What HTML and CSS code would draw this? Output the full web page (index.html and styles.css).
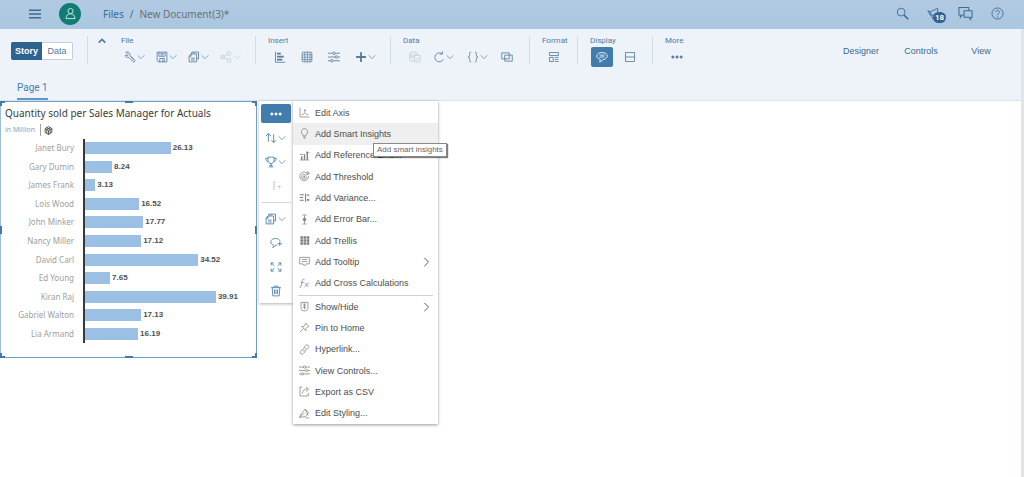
FILE: index.html
```html
<!DOCTYPE html>
<html lang="en">
<head>
<meta charset="utf-8">
<title>New Document(3)</title>
<link rel="stylesheet" href="styles.css">
</head>
<body>
<svg class="sprite" aria-hidden="true">
  <symbol id="chev" viewBox="0 0 12 12"><path d="M2 4l4 4 4-4"/></symbol>
  <symbol id="right" viewBox="0 0 12 12"><path d="M4 1l5 5-5 5"/></symbol>
  <symbol id="wrench" viewBox="0 0 16 16"><path d="M2.500 1.500c3-1 6 1 5.500 4.500l6.500 6.500c.5 1.500-1 2.500-2 2L6.500 8.500C4 9 1.500 7.500 1.500 5.500L4 6.500 5.500 5zM9 7l4 5"/></symbol>
  <symbol id="save" viewBox="0 0 16 16"><path d="M1.500 1.500h13v13H3L1.500 13zM4 1.500v5.500h8V1.500M5 14.500V10h6v4.500M9 11.500v3M6 3.500h4M6 5.200h4"/></symbol>
  <symbol id="copy" viewBox="0 0 16 16"><path d="M5 4V1.500h9v9h-2M8 1.500v2M4 4h7.500v10.500h-10V7zM4 4v3H1.500M4 9.500h5M4 12h5"/></symbol>
  <symbol id="share" viewBox="0 0 16 16"><circle cx="3.500" cy="8" r="2.500"/><circle cx="12" cy="3.500" r="2.500"/><circle cx="12" cy="12.500" r="2.500"/><path d="M6 7l4-2.500M6 9l4 2.500M1 8h5"/></symbol>
  <symbol id="bars" viewBox="0 0 16 16"><path d="M2 1v14h13"/><path d="M4 3.500h5M4 7.500h9M4 11.500h7" stroke-width="2.600"/></symbol>
  <symbol id="table" viewBox="0 0 16 16"><rect x="1.500" y="1.500" width="13" height="13" rx="2"/><path d="M1.500 5h13M1.500 8.300h13M1.500 11.500h13M5 1.500v13M8.500 1.500v13M12 1.500v13" stroke-width=".9"/></symbol>
  <symbol id="sliders" viewBox="0 0 16 16"><path d="M0 3h6M10 3h6M0 8h9M13 8h3M0 13h3M7 13h9"/><circle cx="8" cy="3" r="1.700"/><circle cx="11" cy="8" r="1.700"/><circle cx="5" cy="13" r="1.700"/></symbol>
  <symbol id="plus" viewBox="0 0 16 16"><path d="M8 1.500v13M1.500 8h13" stroke-width="2.400"/></symbol>
  <symbol id="database" viewBox="0 0 16 16"><ellipse cx="6" cy="3.500" rx="5" ry="2"/><path d="M1 3.500v8c0 1.500 2 2 5 2M11 3.500V5M1 7.500c1 1.500 3 1.500 5 1.500M7.500 6h7.500v8.500H7.500zM9 10l2 2 3-4M1 5.500c2 2 4 2 6 1.500"/></symbol>
  <symbol id="refresh" viewBox="0 0 16 16"><path d="M12 3.500A6 6 0 1 0 14 11M12.500.5v3.500H9"/></symbol>
  <symbol id="braces" viewBox="0 0 16 16"><path d="M5.500 1.500C3 1.500 3.500 3 3.500 5S3 8 1.500 8C3 8 3.500 9 3.500 11s-.5 3.500 2 3.500M10.500 1.500c2.500 0 2 1.500 2 3.500s.5 3 2 3c-1.500 0-2 1-2 3s.5 3.500-2 3.500"/></symbol>
  <symbol id="overlap" viewBox="0 0 16 16"><path d="M1 2.500h10v8H1zM5 5.500h10v8H5z"/></symbol>
  <symbol id="layout" viewBox="0 0 16 16"><path d="M2 2h12v4H2zM2 8.500h5V14H2zM9 8.500h5M9 11.200h5M9 14h5"/></symbol>
  <symbol id="comment" viewBox="0 0 16 16"><path d="M8 2c4 0 7 2 7 4.700S12 11.500 9 11.500c-1 2-2.500 3-4.500 3 1-1 1.500-2 1-3.500C3 10.500 1 9 1 6.700 1 4 4 2 8 2zM4.500 5.500h7M4.500 8h7"/></symbol>
  <symbol id="split" viewBox="0 0 16 16"><path d="M2 2h12v12H2zM2 8h12"/></symbol>
  <symbol id="dots" viewBox="0 0 16 16"><circle cx="2.500" cy="8" r="1.500"/><circle cx="8" cy="8" r="1.500"/><circle cx="13.500" cy="8" r="1.500"/></symbol>
  <symbol id="sort" viewBox="0 0 16 16"><path d="M4.500 13V2M1 5.500L4.500 2 8 5.500M11.500 3v11M8.500 11l3 3 3.500-3"/></symbol>
  <symbol id="trophy" viewBox="0 0 16 16"><path d="M4 1.500h8v4c0 3-2 4.500-4 4.500S4 8.500 4 5.500zM4 3H1c0 3 1.500 4.500 3.500 4.500M12 3h3c0 3-1.500 4.500-3.500 4.500M8 10v4M5 14.500h6M6 12.500h4"/></symbol>
  <symbol id="tree" viewBox="0 0 16 16"><path d="M5 2v12M5 3h3M5 6h2M5 9h3M5 12h2M10 9h5M12.500 6.500v5"/></symbol>
  <symbol id="addcomment" viewBox="0 0 16 16"><path d="M13.500 6C13 3.500 11 2 7.500 2S1 3.700 1 6.500c0 2.200 1.500 3.500 3.500 4 .3 1.500 0 2.500-1 3.500 2-.3 3.500-1.500 4-3h2M10 9h6M13 6.500v5.500"/></symbol>
  <symbol id="expand" viewBox="0 0 16 16"><path d="M1.500 6V2.500H5M1.500 2.500L6 6.500M11 2.500h3.500V6M14.500 2.500L10 6.500M1.500 10v3.500H5M1.500 13.500L6 9.500M11 13.500h3.500V10M14.500 13.500L10 9.500"/></symbol>
  <symbol id="trash" viewBox="0 0 16 16"><path d="M1.500 3.500h13M5.500 3.500v-2h5v2M3 3.500l.7 11h8.600l.7-11M6 6v6M8 6v6M10 6v6"/></symbol>
  <symbol id="axis" viewBox="0 0 16 16"><path d="M1.500 1v13.500H15M4 11h2l2.500-3 3 3h2M8.500 3v4M7 5h3"/></symbol>
  <symbol id="bulb" viewBox="0 0 16 16"><path d="M6 11.500C6 9 3.500 8.500 3.500 5.300 3.500 2.800 5.500 1 8 1s4.500 1.800 4.500 4.300C12.500 8.500 10 9 10 11.500zM6 13.300h4M7 15h2"/></symbol>
  <symbol id="refline" viewBox="0 0 16 16"><path d="M1 14.500h14M1 6.500h5M10 4h5"/><path d="M4 9v5M8 6v8M12 2v12" stroke-width="2"/></symbol>
  <symbol id="target" viewBox="0 0 16 16"><path d="M10.500 2.300A6.300 6.300 0 1 0 13.700 7M9 5.200A3.500 3.500 0 1 0 11 8M7.300 8.700L13 3M11 3.500V2l2-1v2h2l-1.500 2H12"/><circle cx="7.500" cy="8.500" r="1"/></symbol>
  <symbol id="variance" viewBox="0 0 16 16"><path d="M1 4h6M1 8h5M1 12h6M9.500 2v12M11.500 4.500H15M11.500 11.500H15M13.200 9.700v3.600" stroke-width="1.600"/></symbol>
  <symbol id="errorbar" viewBox="0 0 16 16"><path d="M8 2v12M5 1.500h6M5 14.500h6"/><circle cx="8" cy="8" r="2" fill="currentColor"/></symbol>
  <symbol id="trellis" viewBox="0 0 16 16"><path d="M2 3.500h13M2 8h13M2 12.500h13" stroke-width="3.600" stroke-dasharray="3.800 .8"/></symbol>
  <symbol id="tip" viewBox="0 0 16 16"><path d="M1 2h14v9.500h-5l-2 3-2-3H1zM4 5.200h8M4 8.200h8"/></symbol>
  <symbol id="fx" viewBox="0 0 16 16"><path d="M8 2.500C6 1 5 2 4.500 5L3 12c-.3 2-1.500 2-2.500 1.500M2.500 6.500H7M8.500 7c2-.5 2.500 6 5 5.500M14.500 6.800l-6.500 6"/></symbol>
  <symbol id="showhide" viewBox="0 0 16 16"><path d="M3 2h10v8.500c0 2-2 4-5 4s-5-2-5-4zM6 4.500h4M6 7h4M6 9.500h4M8 4v8"/></symbol>
  <symbol id="pin" viewBox="0 0 16 16"><path d="M9.500 1.500l5 5-2 .5-2.500 2.500v3L4 6.500h3L9 4zM6.500 9.500L1.500 14.500"/></symbol>
  <symbol id="link" viewBox="0 0 16 16"><path d="M7 5l3-3c2.500-2 5.500 1 3.700 3.500l-4 4C8 11 6 10.500 5.500 9M9 11l-3 3c-2.500 2-5.500-1-3.700-3.500l4-4C8 5 10 5.500 10.500 7"/></symbol>
  <symbol id="export" viewBox="0 0 16 16"><path d="M5 1.500H1.500v13h12V10M5 11c0-4 2.500-6.500 7-6.500M10 1.500l4 3-4 3.500"/></symbol>
  <symbol id="brush" viewBox="0 0 16 16"><path d="M1 14.500l2-6L9 1.500l5 5-5 6.500H1zM3 12l5-5M9 2l4.500 9M10 14.500h5"/></symbol>
  <symbol id="search" viewBox="0 0 16 16"><circle cx="6.300" cy="6.300" r="4.800"/><path d="M10 10l5 5" stroke-width="1.900"/></symbol>
  <symbol id="horn" viewBox="0 0 16 16"><path d="M1 4.500l3 1.500 9-4.500v11L8 10.500M4 6l1 4M1 4.500L4 10h4M5 10l2 4.500h2.500"/></symbol>
  <symbol id="chat" viewBox="0 0 16 16"><path d="M6 9.500H4.500L2.500 12V9.500H1v-8h10.500V5M6.500 5H15v7h-1.500v2.500L11.500 12h-5z"/></symbol>
  <symbol id="help" viewBox="0 0 16 16"><circle cx="8" cy="8" r="6.800"/><path d="M5.800 6.200C6 3.500 10.300 3.600 10.300 6.200 10.300 8 8 8 8 10M8 11.500v1.300"/></symbol>
  <symbol id="user" viewBox="0 0 16 16"><circle cx="8" cy="5" r="3.200"/><path d="M2.500 14.300c0-8 11-8 11 0z"/></symbol>
  <symbol id="menu" viewBox="0 0 16 16"><path d="M0 3h16M0 8h16M0 13h16" stroke-width="2"/></symbol>
  <symbol id="cube" viewBox="0 0 16 16"><path d="M8 1l6 3.500v7L8 15l-6-3.500v-7zM2 4.500L8 8l6-3.500M8 8v7M5 3l6 3M11 3L5 6M5 6v7M11 6v7" stroke-width="1.500"/></symbol>
</svg>

<header class="shell">
  <button class="icon-btn" aria-label="Menu"><svg class="icon"><use href="#menu"/></svg></button>
  <button class="avatar" aria-label="Profile"><svg class="icon"><use href="#user"/></svg></button>
  <nav class="crumbs"><a href="#">Files</a><span>/</span><span class="current">New Document(3)*</span></nav>
  <div class="shell-actions">
    <button class="icon-btn" aria-label="Search"><svg class="icon"><use href="#search"/></svg></button>
    <button class="icon-btn notify" aria-label="Notifications"><svg class="icon"><use href="#horn"/></svg><span class="badge">18</span></button>
    <button class="icon-btn chat" aria-label="Discussions"><svg class="icon"><use href="#chat"/></svg></button>
    <button class="icon-btn" aria-label="Help"><svg class="icon"><use href="#help"/></svg></button>
  </div>
</header>

<div class="workspace">
  <div class="toolbar">
    <div class="mode"><button class="on">Story</button><button>Data</button></div>
    <div class="groups">
      <div class="collapse"><button class="icon-btn" aria-label="Collapse toolbar"><svg class="chev up"><use href="#chev"/></svg></button></div>
      <section class="group file"><h2>File</h2><div class="tools">
        <button class="tool" aria-label="Settings"><svg class="icon"><use href="#wrench"/></svg><svg class="chev"><use href="#chev"/></svg></button>
        <button class="tool" aria-label="Save"><svg class="icon"><use href="#save"/></svg><svg class="chev"><use href="#chev"/></svg></button>
        <button class="tool" aria-label="Copy"><svg class="icon"><use href="#copy"/></svg><svg class="chev"><use href="#chev"/></svg></button>
        <button class="tool" aria-label="Share" disabled><svg class="icon"><use href="#share"/></svg><svg class="chev"><use href="#chev"/></svg></button>
      </div></section>
      <section class="group insert"><h2>Insert</h2><div class="tools">
        <button class="tool" aria-label="Chart"><svg class="icon"><use href="#bars"/></svg></button>
        <button class="tool" aria-label="Table"><svg class="icon"><use href="#table"/></svg></button>
        <button class="tool" aria-label="Input control"><svg class="icon"><use href="#sliders"/></svg></button>
        <button class="tool" aria-label="Add"><svg class="icon"><use href="#plus"/></svg><svg class="chev"><use href="#chev"/></svg></button>
      </div></section>
      <section class="group data"><h2>Data</h2><div class="tools">
        <button class="tool" aria-label="Edit data" disabled><svg class="icon"><use href="#database"/></svg></button>
        <button class="tool" aria-label="Refresh"><svg class="icon"><use href="#refresh"/></svg><svg class="chev"><use href="#chev"/></svg></button>
        <button class="tool" aria-label="Variables"><svg class="icon"><use href="#braces"/></svg><svg class="chev"><use href="#chev"/></svg></button>
        <button class="tool" aria-label="Linked analysis"><svg class="icon"><use href="#overlap"/></svg></button>
      </div></section>
      <section class="group format"><h2>Format</h2><div class="tools">
        <button class="tool" aria-label="Layouts"><svg class="icon"><use href="#layout"/></svg></button>
      </div></section>
      <section class="group display"><h2>Display</h2><div class="tools">
        <button class="tool active" aria-label="Comments"><svg class="icon"><use href="#comment"/></svg></button>
        <button class="tool" aria-label="Condensed"><svg class="icon"><use href="#split"/></svg></button>
      </div></section>
      <section class="group more"><h2>More</h2><div class="tools">
        <button class="tool" aria-label="More"><svg class="icon solid"><use href="#dots"/></svg></button>
      </div></section>
    </div>
    <nav class="panels"><a href="#">Designer</a><a href="#">Controls</a><a href="#">View</a></nav>
  </div>
  <nav class="pages"><a href="#" class="page">Page 1</a></nav>

  <main class="canvas">
    <article class="chart">
      <h1>Quantity sold per Sales Manager for Actuals</h1>
      <p class="unit"><span>in Million</span><svg class="icon"><use href="#cube"/></svg></p>
      <ul class="rows">
        <li><span class="name">Janet Bury</span><span class="plot"><i style="width:52.26%"></i><b>26.13</b></span></li>
        <li><span class="name">Gary Dumin</span><span class="plot"><i style="width:16.48%"></i><b>8.24</b></span></li>
        <li><span class="name">James Frank</span><span class="plot"><i style="width:6.26%"></i><b>3.13</b></span></li>
        <li><span class="name">Lois Wood</span><span class="plot"><i style="width:33.04%"></i><b>16.52</b></span></li>
        <li><span class="name">John Minker</span><span class="plot"><i style="width:35.54%"></i><b>17.77</b></span></li>
        <li><span class="name">Nancy Miller</span><span class="plot"><i style="width:34.24%"></i><b>17.12</b></span></li>
        <li><span class="name">David Carl</span><span class="plot"><i style="width:69.04%"></i><b>34.52</b></span></li>
        <li><span class="name">Ed Young</span><span class="plot"><i style="width:15.3%"></i><b>7.65</b></span></li>
        <li><span class="name">Kiran Raj</span><span class="plot"><i style="width:79.82%"></i><b>39.91</b></span></li>
        <li><span class="name">Gabriel Walton</span><span class="plot"><i style="width:34.26%"></i><b>17.13</b></span></li>
        <li><span class="name">Lia Armand</span><span class="plot"><i style="width:32.38%"></i><b>16.19</b></span></li>
      </ul>
      <span class="handle nw"></span><span class="handle n"></span><span class="handle ne"></span>
      <span class="handle w"></span><span class="handle e"></span>
      <span class="handle sw"></span><span class="handle s"></span><span class="handle se"></span>
    </article>

    <div class="side">
      <button class="side-btn active" aria-label="More actions"><svg class="icon solid"><use href="#dots"/></svg></button>
      <button class="side-btn" aria-label="Sort"><svg class="icon"><use href="#sort"/></svg><svg class="chev"><use href="#chev"/></svg></button>
      <button class="side-btn" aria-label="Rank"><svg class="icon"><use href="#trophy"/></svg><svg class="chev"><use href="#chev"/></svg></button>
      <button class="side-btn" aria-label="Drill" disabled><svg class="icon"><use href="#tree"/></svg></button>
      <hr>
      <button class="side-btn" aria-label="Copy"><svg class="icon"><use href="#copy"/></svg><svg class="chev"><use href="#chev"/></svg></button>
      <button class="side-btn" aria-label="Add comment"><svg class="icon"><use href="#addcomment"/></svg></button>
      <button class="side-btn" aria-label="Full screen"><svg class="icon"><use href="#expand"/></svg></button>
      <button class="side-btn" aria-label="Delete"><svg class="icon"><use href="#trash"/></svg></button>
    </div>

    <div class="menu">
      <div class="menu-list long">
        <button><svg class="icon"><use href="#axis"/></svg>Edit Axis</button>
        <button class="hover"><svg class="icon"><use href="#bulb"/></svg>Add Smart Insights</button>
        <button><svg class="icon"><use href="#refline"/></svg>Add Reference Line...</button>
        <button><svg class="icon"><use href="#target"/></svg>Add Threshold</button>
        <button><svg class="icon"><use href="#variance"/></svg>Add Variance...</button>
        <button><svg class="icon"><use href="#errorbar"/></svg>Add Error Bar...</button>
        <button><svg class="icon"><use href="#trellis"/></svg>Add Trellis</button>
        <button><svg class="icon"><use href="#tip"/></svg>Add Tooltip<svg class="sub"><use href="#right"/></svg></button>
        <button><svg class="icon"><use href="#fx"/></svg>Add Cross Calculations</button>
      </div>
      <hr>
      <div class="menu-list short">
        <button><svg class="icon"><use href="#showhide"/></svg>Show/Hide<svg class="sub"><use href="#right"/></svg></button>
        <button><svg class="icon"><use href="#pin"/></svg>Pin to Home</button>
        <button><svg class="icon"><use href="#link"/></svg>Hyperlink...</button>
        <button><svg class="icon"><use href="#sliders"/></svg>View Controls...</button>
        <button><svg class="icon"><use href="#export"/></svg>Export as CSV</button>
        <button><svg class="icon"><use href="#brush"/></svg>Edit Styling...</button>
      </div>
      <div class="tooltip" role="tooltip">Add smart insights</div>
    </div>
  </main>
</div>
</body>
</html>
```
FILE: styles.css
```css
* { box-sizing: border-box; }
body {
  margin: 0;
  min-height: 100vh;
  display: flex;
  flex-direction: column;
  font: 9px/12px "Liberation Sans", sans-serif;
  color: #4d4d4d;
  background: #fff;
}
h1, h2, p, ul { margin: 0; padding: 0; font-weight: 400; }
button { border: 0; padding: 0; background: none; font: inherit; color: inherit; display: flex; align-items: center; }
a { color: inherit; text-decoration: none; }
svg { fill: none; stroke: currentColor; stroke-width: 1.1; flex: none; }
.sprite { position: absolute; width: 0; height: 0; }
.icon { width: 12px; height: 12px; }
.chev { width: 10px; height: 10px; }
.up { transform: rotate(180deg); stroke-width: 2; }
.solid { fill: currentColor; }

.shell {
  height: 29px;
  display: flex;
  align-items: center;
  padding: 0 20px 2px 29px;
  background: linear-gradient(#b1cae2, #aac7e0);
  color: #3f6b94;
}
.avatar {
  width: 22px;
  height: 22px;
  margin-left: 18px;
  justify-content: center;
  border-radius: 50%;
  background: #107c72;
  color: #d7f1ec;
}
.avatar .icon { width: 13px; height: 13px; }
.crumbs { display: flex; gap: 6px; margin-left: 22px; font: 10px/12px "Noto Sans", sans-serif; }
.crumbs .current { color: #6a7178; }
.shell-actions { display: flex; align-items: center; gap: 18px; margin-left: auto; }
.notify { position: relative; }
.shell-actions .icon { width: 13px; height: 13px; }
.shell-actions .chat .icon { width: 15px; height: 15px; }
.badge {
  position: absolute;
  left: 6px;
  top: 5px;
  width: 13px;
  border-radius: 6px;
  background: #2f6390;
  color: #fff;
  font: bold 8px/11px Roboto, sans-serif;
  text-align: center;
}

.workspace { flex: 1; border-right: 3px solid #e2e4e7; }
.toolbar {
  display: flex;
  height: 49px;
  padding: 7px 10px 0 11px;
  background: #edf3f9;
  color: #557a9c;
}
.mode {
  display: flex;
  width: 62px;
  height: 18px;
  margin: 6px 14px 0 0;
  border: 1px solid #c3cfda;
  border-radius: 2px;
  background: #fff;
}
.mode button { flex: 1; justify-content: center; }
.mode .on { flex: none; width: 31px; margin: -1px 0 -1px -1px; border-radius: 2px 0 0 2px; background: #2e628f; color: #fff; font-weight: 700; }
.groups { display: flex; align-items: flex-start; }
.collapse { height: 28px; width: 34px; padding: 0 9px; border-left: 1px solid #d3dce5; }
.group { height: 28px; padding-left: 12px; border-left: 1px solid #d3dce5; }
.group h2 { font: 8px/10px Roboto, sans-serif; }
.tools { display: flex; align-items: center; height: 20px; padding-left: 6px; margin-top: 1px; }
.tool { flex: none; height: 20px; }
.tool:disabled, .side-btn:disabled { color: #c3ced8; }
.tool .chev, .side-btn .chev { color: #7d99b3; }
.tool:disabled .chev { color: #cdd6df; }
.file { width: 134px; padding-left: 0; border: 0; }
.file .tools { gap: 10px; padding-left: 3px; }
.insert { width: 135px; }
.insert .tools { gap: 15px; }
.data { width: 139px; }
.data .tools { gap: 12px; }
.format { width: 48px; }
.display { width: 75px; }
.display .tools { gap: 11px; padding-left: 1px; }
.tool.active { width: 22px; justify-content: center; border-radius: 2px; background: #427cac; color: #fff; }
.panels { display: flex; margin: 9px 0 0 auto; color: #41698f; }
.panels a { width: 60px; text-align: center; }
.pages { display: flex; height: 23px; padding: 0 17px; background: #edf3f9; border-bottom: 1px solid #dbe2ea; }
.page { height: 22px; padding-top: 4px; border-bottom: 2px solid #5e97c6; color: #4580b3; font: 10px/12px Roboto, sans-serif; }

.canvas { display: flex; align-items: flex-start; }
.chart { position: relative; flex: none; width: 257px; height: 257px; border: 1px solid #71a0c6; border-left-color: #9dbdd8; background: #fff; font-family: "Noto Sans", sans-serif; }
.chart h1 { padding: 4px 0 0 4px; font-size: 10px; line-height: 14px; color: #3c3c3c; }
.unit { display: flex; align-items: center; height: 18px; padding: 2px 0 0 4px; font-size: 7px; color: #a0a0a0; }
.unit span { padding-right: 5px; margin-right: 3px; border-right: 1px solid #a0a0a0; }
.unit .icon { width: 9px; height: 9px; color: #3c3c3c; }
.rows { display: flex; flex-direction: column; height: 205px; padding-top: 1px; list-style: none; font-size: 8px; }
.rows li { flex: 1; display: flex; }
.name { width: 82px; padding-right: 9px; align-self: center; text-align: right; color: #a0a0a0; }
.plot { width: 166px; display: flex; align-items: center; border-left: 2px solid #383838; }
.plot i { flex: none; height: 12px; background: #9bc0e4; }
.plot b { padding-left: 2px; color: #505050; font-family: "Liberation Sans", sans-serif; }
.handle { position: absolute; width: 5px; height: 5px; border: 0 solid #427aa9; }
.n, .s { left: calc(50% - 4px); width: 8px; }
.w, .e { top: calc(50% - 4px); height: 8px; }
.nw, .w, .sw { left: -1px; border-left-width: 2px; }
.ne, .e, .se { right: -1px; border-right-width: 2px; }
.nw, .n, .ne { top: -1px; border-top-width: 2px; }
.sw, .s, .se { bottom: -1px; border-bottom-width: 2px; }

.side {
  flex: none;
  width: 34px;
  height: 202px;
  margin-left: 2px;
  padding: 3px 2px 0;
  background: #fff;
  box-shadow: 0 1px 3px #0000004d;
  color: #427aa9;
}
.side-btn { width: 30px; height: 24px; justify-content: center; }
.side-btn.active { height: 19px; margin-bottom: 3px; border-radius: 2px; background: #427cac; color: #fff; }
.side hr { margin: 4px 0; border: 0; border-top: 1px solid #d4d8dc; }

.menu { position: relative; flex: none; width: 145px; padding-top: 1px; background: #fff; box-shadow: 0 1px 3px #00000066; }
.menu-list { display: flex; flex-direction: column; }
.long { height: 192px; }
.short { height: 128px; }
.menu button { flex: 1; width: 100%; padding: 0 7px 0 6px; gap: 5px; text-align: left; }
.menu .icon { width: 11px; height: 11px; color: #808080; }
.menu .hover { background: #efefef; }
.menu hr { margin: 1px 5px 0; border: 0; border-top: 1px solid #d0d0d0; }
.menu .sub { width: 10px; height: 10px; margin-left: auto; }
.tooltip {
  position: absolute;
  left: 80px;
  top: 42px;
  padding: 0 3px;
  border: 1px solid #888;
  background: #fff;
  box-shadow: 1px 1px 1px #00000080;
  color: #666;
  font-size: 8px;
  white-space: nowrap;
}
```
